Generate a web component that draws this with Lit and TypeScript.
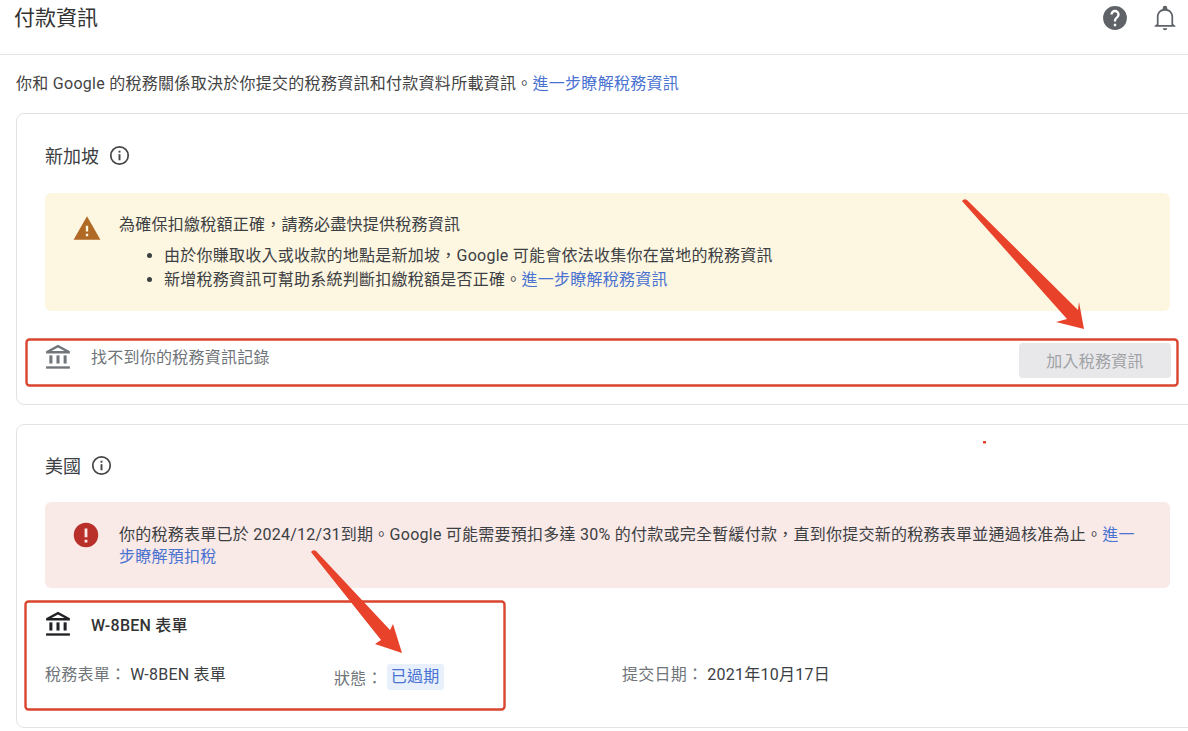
import { LitElement, html, css, svg } from 'lit';
import { customElement } from 'lit/decorators.js';

const bank = (color: string) => html`
  <svg class="bank" viewBox="0 0 24 24" width="28" height="28" fill=${color}>
    <path d="M12 1.5 1.8 7v2h20.4V7L12 1.5Zm0 2.3L17.6 6.9H6.4L12 3.8Z" />
    <rect x="4.6" y="10.6" width="2.6" height="7" />
    <rect x="10.7" y="10.6" width="2.6" height="7" />
    <rect x="16.8" y="10.6" width="2.6" height="7" />
    <rect x="1.8" y="20" width="20.4" height="2" />
  </svg>
`;

const info = html`
  <svg viewBox="0 0 24 24" width="23" height="23" fill="#444746">
    <path d="M12 2a10 10 0 1 0 0 20 10 10 0 0 0 0-20Zm0 18.2a8.2 8.2 0 1 1 0-16.4 8.2 8.2 0 0 1 0 16.4Z" />
    <rect x="11" y="10.6" width="2" height="6.4" />
    <rect x="11" y="7" width="2" height="2" />
  </svg>
`;

// red annotations drawn over the screenshot
const marks = svg`
  <g fill="none" stroke="#d9452f" stroke-width="2.4">
    <rect x="26.5" y="339.5" width="1151" height="46" rx="3" />
    <rect x="25.5" y="601.5" width="479" height="108" rx="3" />
  </g>
  <g fill="#e8432a">
    <path d="M962 201 Q964 198 967 200 L1078 310 L1079 302 L1084 329 L1056 322 L1067 319 Z" />
    <path d="M311 552 Q313 549 316 551 L390 630 L393 624 L402 653 L375 644 L381 640 Z" />
    <rect x="983" y="441" width="3" height="2.5" />
  </g>
`;

@customElement('app-root')
export class AppRoot extends LitElement {
  static styles = css`
    :host {
      display: block;
      position: relative;
      width: 1188px;
      height: 731px;
      overflow: hidden;
      background: #fff;
      color: #3c4043;
      font-family: 'Roboto', 'Noto Sans CJK TC', sans-serif;
      font-size: 16px;
      letter-spacing: 0.25px;
    }
    a {
      color: #4a73d1;
      text-decoration: none;
    }
    .topbar {
      height: 55px;
      box-sizing: border-box;
      border-bottom: 1px solid #e4e4e4;
      display: flex;
      justify-content: space-between;
      padding: 4px 9px 0 14px;
    }
    .topbar h1 {
      margin: 0;
      font-size: 21px;
      line-height: 28px;
      font-weight: 400;
      letter-spacing: 0;
      color: #333;
    }
    .actions {
      display: flex;
      gap: 22px;
      align-items: flex-start;
    }
    .intro {
      margin: 0;
      padding: 19px 0 0 16px;
      height: 39px;
      line-height: 20px;
      letter-spacing: 0.28px;
      color: #444;
    }
    .card {
      margin-left: 16px;
      width: 1190px;
      box-sizing: border-box;
      border: 1px solid #e3e3e3;
      border-radius: 8px;
      padding: 0 35px 0 28px;
    }
    .first {
      height: 292px;
      margin-bottom: 19px;
    }
    .second {
      height: 304px;
    }
    .region {
      display: flex;
      align-items: center;
      gap: 9px;
      height: 24px;
      padding-top: 29px;
      font-size: 18px;
      letter-spacing: 0;
      color: #3c4043;
    }
    .second .region {
      padding-top: 28px;
    }
    .banner {
      border-radius: 6px;
      box-sizing: border-box;
      display: flex;
      line-height: 22px;
      color: #3c4043;
    }
    .warn {
      margin-top: 26px;
      height: 118px;
      background: #fdf6e1;
      padding: 21px 20px 0 28px;
      gap: 18px;
    }
    .warn p {
      margin: 0;
    }
    .warn ul {
      margin: 8px 0 0;
      padding-left: 45px;
      line-height: 24px;
    }
    .err {
      margin-top: 25px;
      height: 86px;
      background: #f9e9e7;
      padding: 22px 31px 0 27px;
      gap: 19px;
    }
    .row {
      display: flex;
      align-items: center;
    }
    .tax-empty {
      margin-top: 21px;
      height: 50px;
      justify-content: space-between;
      color: #70757a;
    }
    .tax-empty .lead {
      display: flex;
      align-items: center;
      gap: 19px;
    }
    .tax-empty .lead span {
      margin-top: -2px;
    }
    .btn {
      width: 152px;
      height: 35px;
      margin: 6px -1px 0 0;
      border-radius: 4px;
      background: #e8e8ea;
      color: #a0a2a6;
      display: flex;
      align-items: center;
      justify-content: center;
    }
    .form-title {
      margin-top: 22px;
      gap: 19px;
      height: 28px;
      font-weight: 500;
      color: #333;
    }
    .meta {
      margin-top: 22px;
      height: 28px;
    }
    .meta > div {
      display: flex;
      align-items: center;
      gap: 4px;
    }
    .meta .label {
      color: #70757a;
    }
    .meta .col1 {
      width: 289px;
      margin-top: -2px;
    }
    .meta .col2 {
      width: 288px;
      margin-top: 6px;
    }
    .meta .col3 {
      margin-top: -2px;
    }
    .status {
      background: #e8f0fb;
      color: #4a73d1;
      border-radius: 3px;
      padding: 2px 4px;
      line-height: 22px;
    }
    .bank {
      flex: none;
      margin-left: -1px;
    }
    .overlay {
      position: absolute;
      inset: 0;
      pointer-events: none;
    }
  `;

  render() {
    return html`
      <header class="topbar">
        <h1>付款資訊</h1>
        <div class="actions">
          <svg viewBox="0 0 24 24" width="28" height="28" fill="#5f6368">
            <path d="M12 1.800a10.200 10.200 0 1 0 0 20.400 10.200 10.200 0 0 0 0-20.400Zm1 17.200h-2v-2h2v2Zm2.100-7.700-.9.900c-.8.800-1.200 1.300-1.200 2.800h-2v-.5c0-1.100.4-2.100 1.200-2.800l1.200-1.300c.4-.3.6-.8.6-1.400a2 2 0 0 0-4 0H8a4 4 0 0 1 8 0c0 .9-.4 1.700-.9 2.300Z" />
          </svg>
          <svg viewBox="0 0 24 24" width="28" height="28" fill="#5f6368">
            <path d="M12 22.500a2 2 0 0 0 2-1.700h-4a2 2 0 0 0 2 1.700Zm7-5.300v-6c0-3.400-2-6.100-5-6.900V3.600a2 2 0 0 0-4 0v.7c-3 .8-5 3.500-5 6.900v6l-2 1.600v.8h18v-.8l-2-1.600Zm-1.500.8h-11v-6.800c0-3 1.800-5.400 5.500-5.400s5.500 2.400 5.500 5.400V18Z" />
          </svg>
        </div>
      </header>

      <p class="intro">你和 Google 的稅務關係取決於你提交的稅務資訊和付款資料所載資訊。<a href="#">進一步瞭解稅務資訊</a></p>

      <section class="card first">
        <div class="region">新加坡 ${info}</div>
        <div class="banner warn">
          <svg viewBox="0 0 24 24" width="28" height="28" fill="#b06a26" style="flex:none">
            <path d="M12 2 .5 22h23L12 2Zm1 17h-2v-2h2v2Zm0-4h-2V10h2v5Z" />
          </svg>
          <div>
            <p>為確保扣繳稅額正確，請務必盡快提供稅務資訊</p>
            <ul>
              <li>由於你賺取收入或收款的地點是新加坡，Google 可能會依法收集你在當地的稅務資訊</li>
              <li>新增稅務資訊可幫助系統判斷扣繳稅額是否正確。<a href="#">進一步瞭解稅務資訊</a></li>
            </ul>
          </div>
        </div>
        <div class="row tax-empty">
          <div class="lead">${bank('#70757a')}<span>找不到你的稅務資訊記錄</span></div>
          <div class="btn">加入稅務資訊</div>
        </div>
      </section>

      <section class="card second">
        <div class="region">美國 ${info}</div>
        <div class="banner err">
          <svg viewBox="0 0 24 24" width="28" height="28" fill="#b9302a" style="flex:none;margin-top:-3px">
            <path d="M12 1.500a10.500 10.500 0 1 0 0 21 10.500 10.500 0 0 0 0-21Zm1.200 12.500h-2.400V6.500h2.400V14Zm0 4.500h-2.400V16h2.400v2.500Z" />
          </svg>
          <div>你的稅務表單已於 2024/12/31到期。Google 可能需要預扣多達 30% 的付款或完全暫緩付款，直到你提交新的稅務表單並通過核准為止。<a href="#">進一步瞭解預扣稅</a></div>
        </div>
        <div class="row form-title">${bank('#202124')}<span>W-8BEN 表單</span></div>
        <div class="row meta">
          <div class="col1"><span class="label">稅務表單：</span><span>W-8BEN 表單</span></div>
          <div class="col2"><span class="label">狀態：</span><span class="status">已過期</span></div>
          <div class="col3"><span class="label">提交日期：</span><span>2021年10月17日</span></div>
        </div>
      </section>

      <svg class="overlay" viewBox="0 0 1188 731" width="1188" height="731">${marks}</svg>
    `;
  }
}
